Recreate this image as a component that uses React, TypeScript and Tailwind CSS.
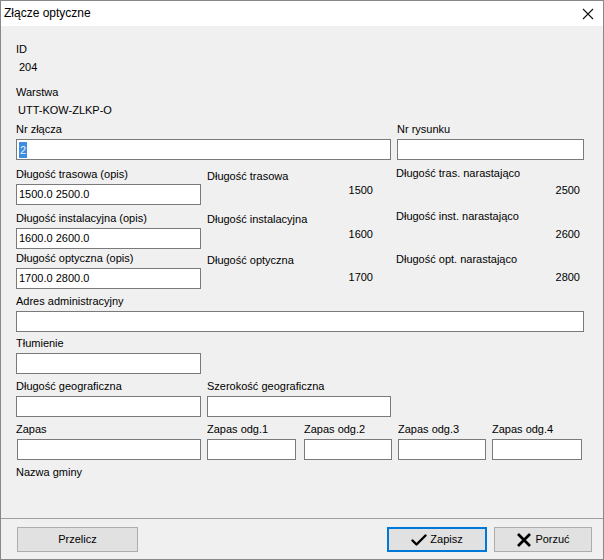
import React from "react";

const font = { fontFamily: '"Liberation Sans", Arial, sans-serif' };

function Input({ w, value, selected, className = "" }: { w: string; value?: string; selected?: boolean; className?: string }) {
  return (
    <div className={`h-[21px] bg-white border border-[#7a7a7a] flex items-center pl-[2px] ${w} ${className}`}>
      {selected ? (
        <span className="bg-[#3d8ee0] text-[#eaf2fb] leading-[16px] px-[1px]">{value}</span>
      ) : (
        <span>{value}</span>
      )}
    </div>
  );
}

function Label({ children, className = "" }: { children: React.ReactNode; className?: string }) {
  return <div className={`h-[13px] leading-[13px] whitespace-nowrap ${className}`}>{children}</div>;
}

function Field({ label, w, value, selected, className = "", inputClass = "" }: { label: string; w: string; value?: string; selected?: boolean; className?: string; inputClass?: string }) {
  return (
    <div className={`flex flex-col ${className}`}>
      <Label>{label}</Label>
      <Input w={w} value={value} selected={selected} className={`mt-[3px] ${inputClass}`} />
    </div>
  );
}

function LenRow({
  label1, value1, label2, value2, label3, value3, className, l2, v2, l3, v3,
}: {
  label1: string; value1: string; label2: string; value2: string; label3: string; value3: string; className: string;
  l2: string; v2: string; l3: string; v3: string;
}) {
  return (
    <div className={`flex h-[37px] ${className}`}>
      <Field label={label1} w="w-[185px]" value={value1} />
      <div className="ml-[6px] w-[166px] flex flex-col">
        <Label className={l2}>{label2}</Label>
        <div className={`text-right leading-[13px] ${v2}`}>{value2}</div>
      </div>
      <div className="ml-[23px] w-[184px] flex flex-col">
        <Label className={l3}>{label3}</Label>
        <div className={`text-right leading-[13px] ${v3}`}>{value3}</div>
      </div>
    </div>
  );
}

export default function App() {
  return (
    <div
      style={font}
      className="w-[604px] h-[560px] border border-[#888888] bg-[#f0f0f0] flex flex-col text-[11px] leading-[13px] text-black overflow-hidden"
    >
      {/* Title bar */}
      <div className="h-[25px] bg-white flex items-center justify-between shrink-0">
        <span className="pl-[3px] text-[12px]">Złącze optyczne</span>
        <svg width="12" height="12" viewBox="0 0 12 12" className="mr-[9px] mt-[1px]">
          <path d="M1 1 L11 11 M11 1 L1 11" stroke="#111" strokeWidth="1.1" />
        </svg>
      </div>

      {/* Body */}
      <div className="flex-1 flex flex-col pl-[15px]">
        <Label className="mt-[17px]">ID</Label>
        <Label className="mt-[5px] pl-[3px]">204</Label>
        <Label className="mt-[12px]">Warstwa</Label>
        <Label className="mt-[5px] pl-[2px]">UTT-KOW-ZLKP-O</Label>

        <div className="flex mt-[6px]">
          <Field label="Nr złącza" w="w-[375px]" value="2" selected />
          <Field label="Nr rysunku" w="w-[187px]" className="ml-[6px]" />
        </div>

        <LenRow
          className="mt-[8px]"
          label1="Długość trasowa (opis)" value1="1500.0 2500.0"
          label2="Długość trasowa" value2="1500"
          label3="Długość tras. narastająco" value3="2500"
          l2="mt-[2px]" v2="mt-[1px]" l3="mt-[-1px]" v3="mt-[4px]"
        />
        <LenRow
          className="mt-[7px]"
          label1="Długość instalacyjna (opis)" value1="1600.0 2600.0"
          label2="Długość instalacyjna" value2="1600"
          label3="Długość inst. narastająco" value3="2600"
          l2="mt-[1px]" v2="mt-[2px]" l3="mt-[-2px]" v3="mt-[5px]"
        />
        <LenRow
          className="mt-[3px]"
          label1="Długość optyczna (opis)" value1="1700.0 2800.0"
          label2="Długość optyczna" value2="1700"
          label3="Długość opt. narastająco" value3="2800"
          l2="mt-[2px]" v2="mt-[4px]" l3="mt-[1px]" v3="mt-[5px]"
        />

        <Field label="Adres administracyjny" w="w-[568px]" className="mt-[6px]" />
        <Field label="Tłumienie" w="w-[185px]" className="mt-[5px]" />

        <div className="flex mt-[6px]">
          <Field label="Długość geograficzna" w="w-[185px]" />
          <Field label="Szerokość geograficzna" w="w-[184px]" className="ml-[6px]" />
        </div>

        <div className="flex mt-[6px]">
          <Field label="Zapas" w="w-[184px]" inputClass="ml-[1px]" className="w-[185px]" />
          <Field label="Zapas odg.1" w="w-[89px]" className="ml-[6px]" />
          <Field label="Zapas odg.2" w="w-[88px]" className="ml-[8px]" />
          <Field label="Zapas odg.3" w="w-[88px]" className="ml-[6px]" />
          <Field label="Zapas odg.4" w="w-[90px]" className="ml-[6px]" />
        </div>

        <Label className="mt-[6px]">Nazwa gminy</Label>
      </div>

      {/* Footer */}
      <div className="h-[41px] shrink-0 border-t border-[#a0a0a0] flex items-start pt-[8px] pl-[16px] pr-[11px]">
        <button className="w-[121px] h-[25px] bg-[#e1e1e1] border border-[#adadad] text-[11px] flex items-center justify-center">
          Przelicz
        </button>
        <button className="ml-auto w-[100px] h-[25px] bg-[#e1e1e1] border-2 border-[#0078d7] text-[11px] flex items-center justify-center gap-[3px]">
          <svg width="16" height="14" viewBox="0 0 16 14">
            <path d="M1.5 7.5 L5.5 11.5 L14.5 2.5" stroke="#000" strokeWidth="2.4" fill="none" strokeLinecap="round" strokeLinejoin="round" />
          </svg>
          <span>Zapisz</span>
        </button>
        <button className="ml-[7px] w-[98px] h-[25px] bg-[#e1e1e1] border border-[#adadad] text-[11px] flex items-center justify-center gap-[3px]">
          <svg width="16" height="16" viewBox="0 0 16 16">
            <path d="M2 2 L14 14 M14 2 L2 14" stroke="#000" strokeWidth="2.8" fill="none" />
          </svg>
          <span>Porzuć</span>
        </button>
      </div>
    </div>
  );
}
